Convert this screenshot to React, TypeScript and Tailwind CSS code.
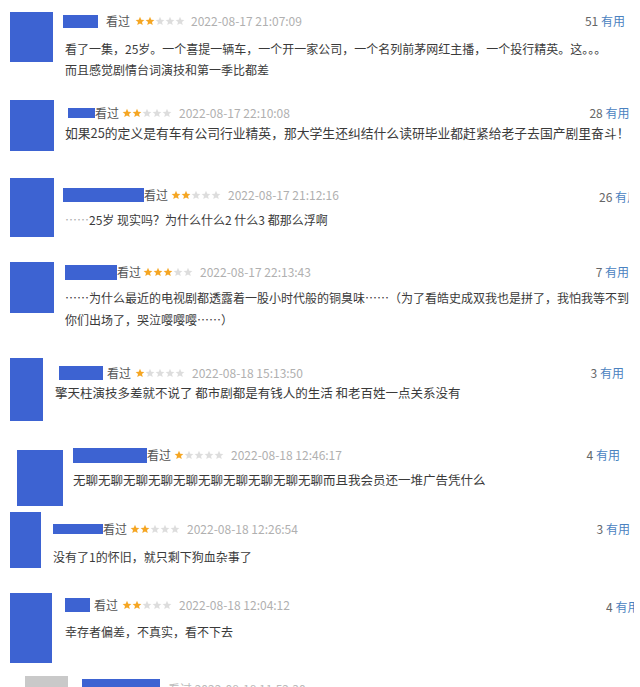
import React from "react";

function Star({ on }: { on: boolean }) {
  return (
    <svg viewBox="0 0 24 24" className={on ? "h-[10px] w-[10px] fill-[#f5a623]" : "h-[10px] w-[10px] fill-[#dddddd]"}>
      <path d="M12 1.8l3 7 7.5.6-5.7 4.9 1.8 7.4L12 17.7l-6.6 4 1.8-7.4-5.7-4.9 7.5-.6z" />
    </svg>
  );
}

type HeadProps = {
  bar: string;
  seen?: string;
  stars: string;
  date: string;
  rating: number;
  time: string;
};

function Head({ bar, seen = "", stars, date, rating, time }: HeadProps) {
  return (
    <>
      <div className={"shrink-0 bg-[#3d63d2] " + bar} />
      <span className={"shrink-0 text-[12px] text-[#555] " + seen}>看过</span>
      <span className={"flex shrink-0 " + stars}>
        {[0, 1, 2, 3, 4].map((i) => (
          <Star key={i} on={i < rating} />
        ))}
      </span>
      <span className={"shrink-0 text-[12px] text-[#b0b0b0] " + date}>{time}</span>
    </>
  );
}

function Useful({ n, cls = "" }: { n: number; cls?: string }) {
  return (
    <span className={"ml-auto shrink-0 whitespace-nowrap text-[12px] text-[#666] " + cls}>
      {n} <span className="text-[#4a82c0]">有用</span>
    </span>
  );
}

export default function App() {
  return (
    <div className="w-[640px] h-[687px] overflow-hidden bg-white font-['Noto_Sans_CJK_SC','Microsoft_YaHei',sans-serif] text-[#3a3a3a]">
      {/* 1 */}
      <div className="flex h-[90px]">
        <div className="ml-[10px] mt-[12px] h-[50px] w-[43px] shrink-0 bg-[#3d63d2]" />
        <div className="ml-[12px] flex-1 pr-[15px]">
          <div className="mt-[11px] flex h-[20px] items-center">
            <Head bar="-ml-[2px] w-[35px] h-[13px]" seen="ml-[8px]" stars="ml-[5px]" date="ml-[6px]" rating={2} time="2022-08-17 21:07:09" />
            <Useful n={51} />
          </div>
          <div className="mt-[7px] whitespace-nowrap text-[12px] leading-[21px]">
            看了一集，25岁。一个喜提一辆车，一个开一家公司，一个名列前茅网红主播，一个投行精英。这。。。
            <br />
            而且感觉剧情台词演技和第一季比都差
          </div>
        </div>
      </div>

      {/* 2 */}
      <div className="flex h-[80px]">
        <div className="ml-[10px] mt-[10px] h-[51px] w-[44px] shrink-0 bg-[#3d63d2]" />
        <div className="ml-[11px] flex-1 pr-[12px]">
          <div className="mt-[13px] flex h-[20px] items-center">
            <Head bar="ml-[3px] w-[27px] h-[10px]" stars="ml-[3px]" date="ml-[7px]" rating={2} time="2022-08-17 22:10:08" />
            <Useful n={28} />
          </div>
          <div className="whitespace-nowrap text-[12.8px] leading-[20px]">
            如果25的定义是有车有公司行业精英，那大学生还纠结什么读研毕业都赶紧给老子去国产剧里奋斗！
          </div>
        </div>
      </div>

      {/* 3 */}
      <div className="flex h-[85px]">
        <div className="ml-[10px] mt-[8px] h-[59px] w-[44px] shrink-0 bg-[#3d63d2]" />
        <div className="ml-[11px] flex-1 pr-[11px]">
          <div className="mt-[15px] flex h-[20px] items-center">
            <Head bar="-ml-[2px] w-[81px] h-[14px]" stars="ml-[3px]" date="ml-[7px]" rating={2} time="2022-08-17 21:12:16" />
            <div className="ml-auto w-[30px] overflow-hidden">
              <Useful n={26} />
            </div>
          </div>
          <div className="mt-[5px] whitespace-nowrap text-[12px] leading-[20px]">
            <span className="text-[#aaa]">……</span>25岁 现实吗？为什么什么2 什么3 都那么浮啊
          </div>
        </div>
      </div>

      {/* 4 */}
      <div className="flex h-[90px]">
        <div className="ml-[10px] mt-[7px] h-[51px] w-[44px] shrink-0 bg-[#3d63d2]" />
        <div className="ml-[11px] flex-1 pr-[12px]">
          <div className="mt-[7px] flex h-[20px] items-center">
            <Head bar="w-[52px] h-[15px]" stars="ml-[2px]" date="ml-[7px]" rating={3} time="2022-08-17 22:13:43" />
            <Useful n={7} />
          </div>
          <div className="mt-[5px] whitespace-nowrap text-[12px] leading-[22px]">
            ……为什么最近的电视剧都透露着一股小时代般的铜臭味……（为了看皓史成双我也是拼了，我怕我等不到
            <br />
            你们出场了，哭泣嘤嘤嘤……）
          </div>
        </div>
      </div>

      {/* 5 */}
      <div className="flex h-[95px]">
        <div className="ml-[10px] mt-[13px] h-[63px] w-[33px] shrink-0 bg-[#3d63d2]" />
        <div className="ml-[12px] flex-1 pr-[16px]">
          <div className="mt-[18px] flex h-[20px] items-center">
            <Head bar="ml-[4px] w-[44px] h-[14px]" seen="ml-[4px]" stars="ml-[4px]" date="ml-[7px]" rating={1} time="2022-08-18 15:13:50" />
            <Useful n={3} />
          </div>
          <div className="whitespace-nowrap text-[12.5px] leading-[20px]">
            擎天柱演技多差就不说了 都市剧都是有钱人的生活 和老百姓一点关系没有
          </div>
        </div>
      </div>

      {/* 6 */}
      <div className="flex h-[68px]">
        <div className="ml-[17px] mt-[10px] h-[56px] w-[46px] shrink-0 bg-[#3d63d2]" />
        <div className="ml-[10px] flex-1 pr-[20px]">
          <div className="mt-[5px] flex h-[20px] items-center">
            <Head bar="w-[74px] h-[15px]" stars="ml-[3px]" date="ml-[7px]" rating={1} time="2022-08-18 12:46:17" />
            <Useful n={4} />
          </div>
          <div className="mt-[5px] whitespace-nowrap text-[12.5px] leading-[20px]">
            无聊无聊无聊无聊无聊无聊无聊无聊无聊无聊而且我会员还一堆广告凭什么
          </div>
        </div>
      </div>

      {/* 7 */}
      <div className="flex h-[72px]">
        <div className="ml-[10px] mt-[4px] h-[56px] w-[31px] shrink-0 bg-[#3d63d2]" />
        <div className="ml-[12px] flex-1 pr-[10px]">
          <div className="mt-[11px] flex h-[20px] items-center">
            <Head bar="w-[50px] h-[10px]" stars="ml-[3px]" date="ml-[7px]" rating={2} time="2022-08-18 12:26:54" />
            <Useful n={3} />
          </div>
          <div className="mt-[8px] whitespace-nowrap text-[12px] leading-[20px]">
            没有了1的怀旧，就只剩下狗血杂事了
          </div>
        </div>
      </div>

      {/* 8 */}
      <div className="flex h-[92px]">
        <div className="ml-[10px] mt-[13px] h-[70px] w-[42px] shrink-0 bg-[#3d63d2]" />
        <div className="ml-[13px] flex-1 overflow-hidden pr-[6px]">
          <div className="mt-[15px] flex h-[20px] items-center">
            <Head bar="w-[25px] h-[14px]" seen="ml-[4px]" stars="ml-[4px]" date="ml-[7px]" rating={2} time="2022-08-18 12:04:12" />
            <div className="ml-auto w-[28px] overflow-hidden">
              <Useful n={4} />
            </div>
          </div>
          <div className="mt-[7px] whitespace-nowrap text-[12px] leading-[20px]">
            幸存者偏差，不真实，看不下去
          </div>
        </div>
      </div>

      {/* 9: cut-off row */}
      <div className="flex h-[15px] overflow-hidden">
        <div className="ml-[25px] mt-[4px] h-[11px] w-[43px] shrink-0 bg-[#c9c9c9]" />
        <div className="ml-[14px] mt-[7px] h-[8px] w-[78px] shrink-0 bg-[#3d63d2]" />
        <span className="ml-[8px] mt-[8px] text-[12px] text-[#bbb]">看过 2022-08-18 11:52:30</span>
      </div>
    </div>
  );
}
